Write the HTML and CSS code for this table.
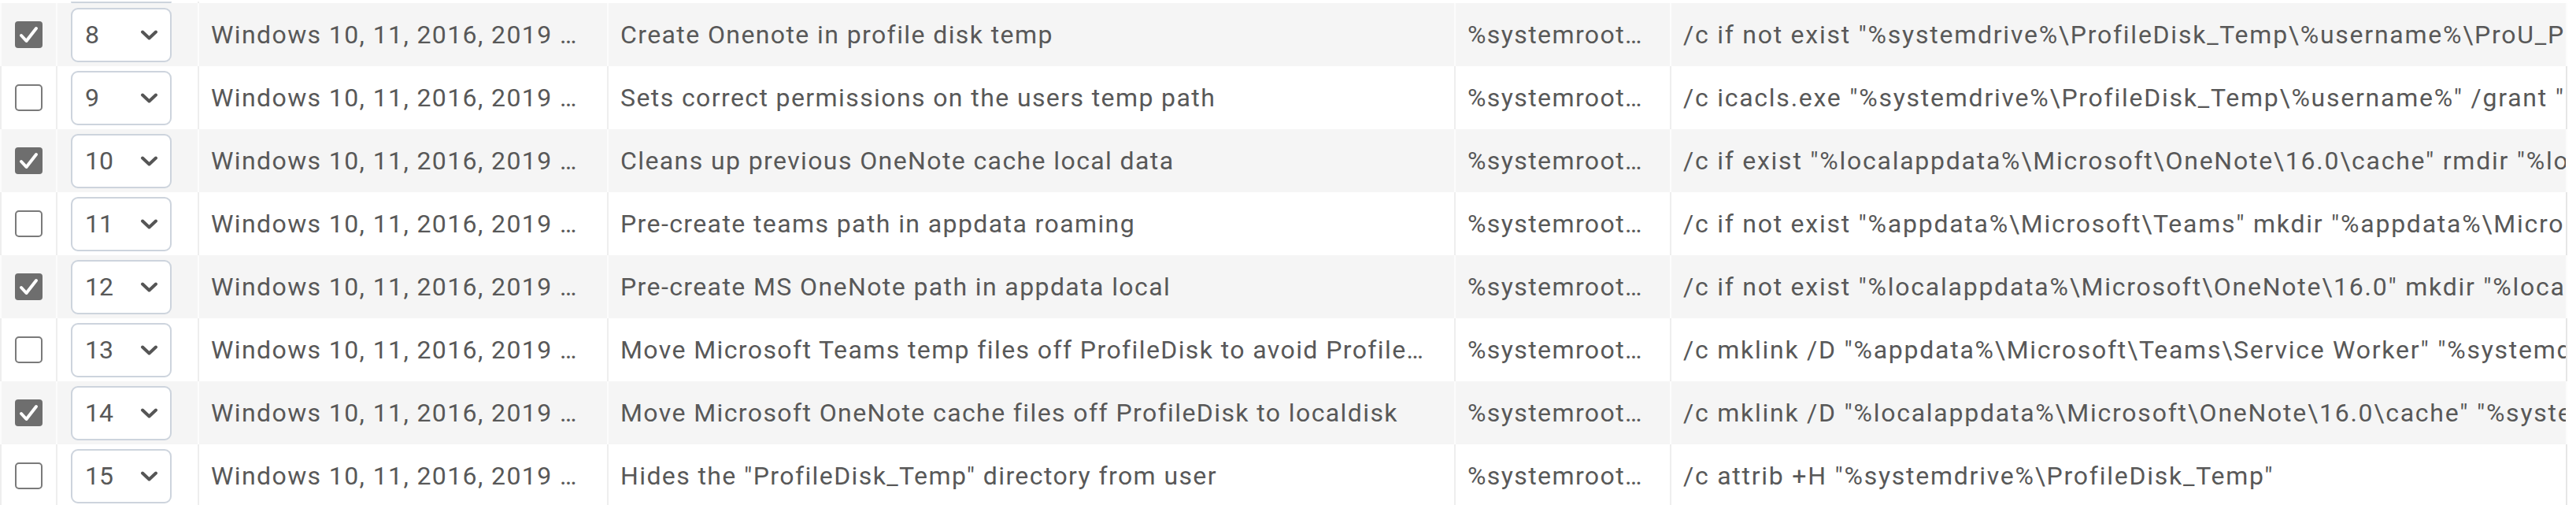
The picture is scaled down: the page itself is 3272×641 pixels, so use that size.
FILE: index.html
```html
<!DOCTYPE html>
<html lang="en">
<head>
<meta charset="utf-8">
<title>Scripts</title>
<link rel="stylesheet" href="styles.css">
</head>
<body>
<div class="table">
  <div class="row row-peek">
    <div class="cell c-check"></div>
    <div class="cell c-order"><div class="sel"></div></div>
    <div class="cell c-os"></div>
    <div class="cell c-desc"></div>
    <div class="cell c-exe"></div>
    <div class="cell c-args"></div>
  </div>
  <div class="row">
    <div class="cell c-check"><span class="cb on"><svg viewBox="0 0 35 34"><polyline points="8,18 14.5,25 27,9"/></svg></span></div>
    <div class="cell c-order"><div class="sel"><span class="num">8</span><svg class="chev" viewBox="0 0 23 13"><polyline points="3,2.5 11.5,10.5 20,2.5"/></svg></div></div>
    <div class="cell c-os">Windows 10, 11, 2016, 2019 …</div>
    <div class="cell c-desc">Create Onenote in profile disk temp</div>
    <div class="cell c-exe">%systemroot…</div>
    <div class="cell c-args">/c if not exist "%systemdrive%\ProfileDisk_Temp\%username%\ProU_P</div>
  </div>
  <div class="row">
    <div class="cell c-check"><span class="cb"></span></div>
    <div class="cell c-order"><div class="sel"><span class="num">9</span><svg class="chev" viewBox="0 0 23 13"><polyline points="3,2.5 11.5,10.5 20,2.5"/></svg></div></div>
    <div class="cell c-os">Windows 10, 11, 2016, 2019 …</div>
    <div class="cell c-desc">Sets correct permissions on the users temp path</div>
    <div class="cell c-exe">%systemroot…</div>
    <div class="cell c-args">/c icacls.exe "%systemdrive%\ProfileDisk_Temp\%username%" /grant "</div>
  </div>
  <div class="row">
    <div class="cell c-check"><span class="cb on"><svg viewBox="0 0 35 34"><polyline points="8,18 14.5,25 27,9"/></svg></span></div>
    <div class="cell c-order"><div class="sel"><span class="num">10</span><svg class="chev" viewBox="0 0 23 13"><polyline points="3,2.5 11.5,10.5 20,2.5"/></svg></div></div>
    <div class="cell c-os">Windows 10, 11, 2016, 2019 …</div>
    <div class="cell c-desc">Cleans up previous OneNote cache local data</div>
    <div class="cell c-exe">%systemroot…</div>
    <div class="cell c-args">/c if exist "%localappdata%\Microsoft\OneNote\16.0\cache" rmdir "%lo</div>
  </div>
  <div class="row">
    <div class="cell c-check"><span class="cb"></span></div>
    <div class="cell c-order"><div class="sel"><span class="num">11</span><svg class="chev" viewBox="0 0 23 13"><polyline points="3,2.5 11.5,10.5 20,2.5"/></svg></div></div>
    <div class="cell c-os">Windows 10, 11, 2016, 2019 …</div>
    <div class="cell c-desc">Pre-create teams path in appdata roaming</div>
    <div class="cell c-exe">%systemroot…</div>
    <div class="cell c-args">/c if not exist "%appdata%\Microsoft\Teams" mkdir "%appdata%\Micro</div>
  </div>
  <div class="row">
    <div class="cell c-check"><span class="cb on"><svg viewBox="0 0 35 34"><polyline points="8,18 14.5,25 27,9"/></svg></span></div>
    <div class="cell c-order"><div class="sel"><span class="num">12</span><svg class="chev" viewBox="0 0 23 13"><polyline points="3,2.5 11.5,10.5 20,2.5"/></svg></div></div>
    <div class="cell c-os">Windows 10, 11, 2016, 2019 …</div>
    <div class="cell c-desc">Pre-create MS OneNote path in appdata local</div>
    <div class="cell c-exe">%systemroot…</div>
    <div class="cell c-args">/c if not exist "%localappdata%\Microsoft\OneNote\16.0" mkdir "%local</div>
  </div>
  <div class="row">
    <div class="cell c-check"><span class="cb"></span></div>
    <div class="cell c-order"><div class="sel"><span class="num">13</span><svg class="chev" viewBox="0 0 23 13"><polyline points="3,2.5 11.5,10.5 20,2.5"/></svg></div></div>
    <div class="cell c-os">Windows 10, 11, 2016, 2019 …</div>
    <div class="cell c-desc">Move Microsoft Teams temp files off ProfileDisk to avoid Profile…</div>
    <div class="cell c-exe">%systemroot…</div>
    <div class="cell c-args">/c mklink /D "%appdata%\Microsoft\Teams\Service Worker" "%systemd</div>
  </div>
  <div class="row">
    <div class="cell c-check"><span class="cb on"><svg viewBox="0 0 35 34"><polyline points="8,18 14.5,25 27,9"/></svg></span></div>
    <div class="cell c-order"><div class="sel"><span class="num">14</span><svg class="chev" viewBox="0 0 23 13"><polyline points="3,2.5 11.5,10.5 20,2.5"/></svg></div></div>
    <div class="cell c-os">Windows 10, 11, 2016, 2019 …</div>
    <div class="cell c-desc">Move Microsoft OneNote cache files off ProfileDisk to localdisk</div>
    <div class="cell c-exe">%systemroot…</div>
    <div class="cell c-args">/c mklink /D "%localappdata%\Microsoft\OneNote\16.0\cache" "%syste</div>
  </div>
  <div class="row">
    <div class="cell c-check"><span class="cb"></span></div>
    <div class="cell c-order"><div class="sel"><span class="num">15</span><svg class="chev" viewBox="0 0 23 13"><polyline points="3,2.5 11.5,10.5 20,2.5"/></svg></div></div>
    <div class="cell c-os">Windows 10, 11, 2016, 2019 …</div>
    <div class="cell c-desc">Hides the "ProfileDisk_Temp" directory from user</div>
    <div class="cell c-exe">%systemroot…</div>
    <div class="cell c-args">/c attrib +H "%systemdrive%\ProfileDisk_Temp"</div>
  </div>
</div>
</body>
</html>
```
FILE: styles.css
```css
html, body {
  margin: 0;
  padding: 0;
  background: #ffffff;
  overflow: hidden;
}

.table {
  width: 3261px;
  font-family: Roboto, "Noto Sans", sans-serif;
  font-size: 32px;
  letter-spacing: 1.4px;
  color: #585858;
}

.row {
  display: grid;
  grid-template-columns: 73px 180px 520px 1076px 274px 1138px;
  height: 80px;
  background: #ffffff;
}

.row-peek {
  height: 4px;
  align-items: end;
}

.row-peek .cell {
  align-items: flex-end;
}

.row-peek .sel {
  height: 2px;
  border-top: none;
  border-radius: 0 0 9px 9px;
}

.row:nth-child(even) {
  background: #f5f5f5;
}

.cell {
  display: flex;
  align-items: center;
  box-sizing: border-box;
  border-right: 2px solid #eeeeee;
  overflow: hidden;
  white-space: nowrap;
  padding-left: 15px;
}

.row:nth-child(even) .cell {
  border-right-color: #fcfcfc;
}

.row .c-check {
  border-left: 2px solid #eeeeee;
  padding-left: 17px;
}

.row:nth-child(even) .c-check {
  border-left-color: #fcfcfc;
}

.row .c-args {
  border-right-color: #e6e6e6;
  padding-right: 2px;
  letter-spacing: 1.75px;
}

.c-order {
  padding-left: 17px;
}

.cb {
  display: block;
  width: 35px;
  height: 34px;
  box-sizing: border-box;
  border: 2.5px solid #7a7a7a;
  border-radius: 5px;
  background: #ffffff;
}

.cb.on {
  border: none;
  border-radius: 4px;
  background: #6e6e6e;
}

.cb svg {
  display: block;
  width: 35px;
  height: 34px;
  fill: none;
  stroke: #ffffff;
  stroke-width: 4;
  stroke-linecap: round;
  stroke-linejoin: round;
}

.sel {
  display: flex;
  align-items: center;
  justify-content: space-between;
  box-sizing: border-box;
  width: 128px;
  height: 69px;
  padding: 0 15px 0 16px;
  border: 2px solid #cdd4dd;
  border-radius: 9px;
  background: #ffffff;
  letter-spacing: 0;
}

.chev {
  width: 23px;
  height: 13px;
  fill: none;
  stroke: #555555;
  stroke-width: 4;
  stroke-linecap: round;
  stroke-linejoin: round;
}
```
